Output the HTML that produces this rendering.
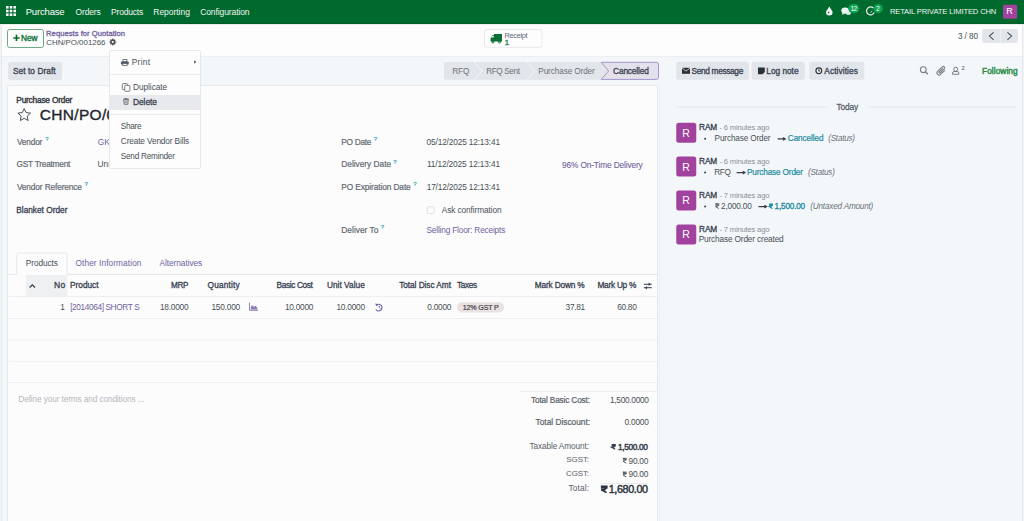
<!DOCTYPE html>
<html><head><meta charset="utf-8">
<style>
html,body{margin:0;padding:0}
body{width:1024px;height:521px;overflow:hidden;position:relative;background:#f3f7fa;font-family:"Liberation Sans",sans-serif}
.a{position:absolute;box-sizing:border-box}
.t{position:absolute;line-height:1;white-space:pre;z-index:5}
.dd .t{z-index:31}
svg{position:absolute;overflow:visible}
</style></head><body>

<!-- navbar -->
<div class="a" style="left:0;top:0;width:1024px;height:24px;background:#00692e"></div>
<div class="a" style="left:0;top:23px;width:1024px;height:1px;background:#005d27"></div>
<div class="a" style="left:0;top:24px;width:1024px;height:1px;background:#e9efeb"></div>
<svg style="left:0;top:0" width="1024" height="24">
  <g fill="#f4f7f5">
    <rect x="6" y="6" width="2.6" height="2.6"/><rect x="9.7" y="6" width="2.6" height="2.6"/><rect x="13.4" y="6" width="2.6" height="2.6"/>
    <rect x="6" y="9.7" width="2.6" height="2.6"/><rect x="9.7" y="9.7" width="2.6" height="2.6"/><rect x="13.4" y="9.7" width="2.6" height="2.6"/>
    <rect x="6" y="13.4" width="2.6" height="2.6"/><rect x="9.7" y="13.4" width="2.6" height="2.6"/><rect x="13.4" y="13.4" width="2.6" height="2.6"/>
  </g>
  <!-- drop -->
  <path d="M829.3 6.6 C828 9 826 10.8 826 12.2 A3.3 3.3 0 0 0 832.6 12.2 C832.6 10.8 830.6 9 829.3 6.6 Z" fill="#f0f4f1"/>
  <circle cx="828.6" cy="12.6" r="0.8" fill="#00692e"/>
  <!-- chat -->
  <ellipse cx="845.2" cy="10.6" rx="3.9" ry="3.1" fill="#eef3ef"/>
  <path d="M842.6 12.6 L841.8 15 L844.6 13.4Z" fill="#eef3ef"/>
  <ellipse cx="848.4" cy="13" rx="2.6" ry="1.9" fill="#dfe9e2"/>
  <rect x="848.3" y="4" width="11" height="9.2" rx="4.6" fill="#0aa34f"/>
  <!-- clock -->
  <path d="M873.5 8.2 A4 4 0 1 0 874.2 12.6" fill="none" stroke="#eef3ef" stroke-width="1.2"/>
  <path d="M870.6 12.6 L872.2 10.8" fill="none" stroke="#dfe9e2" stroke-width="0.9"/>
  <rect x="873.6" y="4" width="9.2" height="9.2" rx="4.6" fill="#0aa34f"/>
  <!-- avatar -->
  <rect x="1003" y="4.8" width="14.2" height="14" rx="1.5" fill="#a0429e"/>
</svg>

<!-- control panel -->
<div class="a" style="left:0;top:25px;width:1024px;height:31px;background:#fdfdfd"></div>
<div class="a" style="left:0;top:56px;width:1024px;height:1px;background:#eceff2"></div>
<div class="a" style="left:7px;top:29px;width:37px;height:18.5px;border:1px solid #6bab84;border-radius:2.5px;background:#fdfdfd"></div>
<svg style="left:0;top:0" width="1024" height="60">
  <path d="M16.5 34.8 V41.1 M13.3 38 H19.7" stroke="#0b6b33" stroke-width="1.7" fill="none"/>
  <!-- gear -->
  <path d="M115.43 41.41 L116.26 41.48 L116.26 42.52 L115.43 42.59 L115.08 43.45 L115.62 44.08 L114.88 44.82 L114.25 44.28 L113.39 44.63 L113.32 45.46 L112.28 45.46 L112.21 44.63 L111.35 44.28 L110.72 44.82 L109.98 44.08 L110.52 43.45 L110.17 42.59 L109.34 42.52 L109.34 41.48 L110.17 41.41 L110.52 40.55 L109.98 39.92 L110.72 39.18 L111.35 39.72 L112.21 39.37 L112.28 38.54 L113.32 38.54 L113.39 39.37 L114.25 39.72 L114.88 39.18 L115.62 39.92 L115.08 40.55Z M113.90 42.0 A1.1 1.1 0 1 0 111.70 42.0 A1.1 1.1 0 1 0 113.90 42.0Z" fill="#4b5057" fill-rule="evenodd"/>
  <!-- receipt button -->
  <rect x="484.5" y="29.5" width="57.5" height="17.8" rx="2.5" fill="#fdfdfd" stroke="#e6e9ec" stroke-width="1"/>
  <g fill="#0b6e35">
    <path d="M494 34 H502 V41.5 H490.6 V38 L492.4 35.2 H494Z"/>
    <circle cx="492.9" cy="42" r="1.4"/><circle cx="499.5" cy="42" r="1.4"/>
  </g>
  <path d="M491.8 35.9 H493.6 V37.6 H491.1Z" fill="#fdfdfd"/>
  <circle cx="492.9" cy="42" r="0.5" fill="#fdfdfd"/><circle cx="499.5" cy="42" r="0.5" fill="#fdfdfd"/>
  <!-- pager -->
  <rect x="982.2" y="28.9" width="35.8" height="14" rx="2.5" fill="#e2e5e9"/>
  <rect x="999.9" y="28.9" width="0.9" height="14" fill="#f3f4f6"/>
  <path d="M993.6 32.3 L989.4 36.1 L993.6 39.9" fill="none" stroke="#4b5057" stroke-width="1.05"/>
  <path d="M1007.4 32.3 L1011.6 36.1 L1007.4 39.9" fill="none" stroke="#4b5057" stroke-width="1.05"/>
</svg>

<!-- button row -->
<div class="a" style="left:7.5px;top:62px;width:54.5px;height:17.6px;background:#e2e5e9;border-radius:2.5px"></div>
<svg style="left:0;top:0" width="1024" height="90">
  <path d="M446 62 H601 L608.5 70.9 L601 79.7 H446 A2 2 0 0 1 444 77.7 V64 A2 2 0 0 1 446 62Z" fill="#e2e5e9"/>
  <path d="M601.2 62.3 H656.5 A2 2 0 0 1 658.5 64.3 V77.4 A2 2 0 0 1 656.5 79.4 H601.2 L608.6 70.9Z" fill="#e5e1ec" stroke="#a497c6" stroke-width="1"/>
  <path d="M474.2 62 L482 70.9 L474.2 79.7" fill="none" stroke="#f6f7f9" stroke-width="1"/>
  <path d="M527 62 L535 70.9 L527 79.7" fill="none" stroke="#f6f7f9" stroke-width="1"/>
  <!-- chatter buttons -->
  <rect x="676.4" y="61.8" width="72.7" height="18" rx="2.5" fill="#e2e5e9"/>
  <rect x="751.6" y="61.8" width="53.2" height="18" rx="2.5" fill="#e2e5e9"/>
  <rect x="809.3" y="61.8" width="55" height="18" rx="2.5" fill="#e2e5e9"/>
  <!-- envelope -->
  <rect x="682" y="67.8" width="8" height="6" fill="#2b3139"/>
  <path d="M682 68.1 L686 71.1 L690 68.1" fill="none" stroke="#e2e5e9" stroke-width="0.8"/>
  <!-- log note -->
  <path d="M758 67.4 H764.8 V72 L762.6 74.2 H758Z" fill="#2b3139"/>
  <!-- clock -->
  <circle cx="818.8" cy="70.8" r="2.9" fill="none" stroke="#2b3139" stroke-width="1.1"/>
  <path d="M818.8 69.2 V71 H820.1" fill="none" stroke="#2b3139" stroke-width="0.9"/>
  <!-- search -->
  <circle cx="923.3" cy="69.7" r="2.9" fill="none" stroke="#7a8088" stroke-width="1.1"/>
  <path d="M925.4 71.8 L927.9 74.2" stroke="#7a8088" stroke-width="1.4"/>
  <!-- paperclip -->
  <path d="M944.6 70.6 L940.6 74.3 A2 2 0 0 1 937.6 71.4 L942.2 66.9 A1.4 1.4 0 0 1 944.3 68.9 L940.2 72.8 A0.7 0.7 0 0 1 939.2 71.8 L942.8 68.4" fill="none" stroke="#7a8088" stroke-width="1.1" stroke-linecap="round"/>
  <!-- user -->
  <circle cx="955.7" cy="69.2" r="2.0" fill="none" stroke="#7a8088" stroke-width="1"/>
  <path d="M952.6 74.3 V73 A1.5 1.5 0 0 1 954.1 71.5 H957.3 A1.5 1.5 0 0 1 958.8 73 V74.3Z" fill="none" stroke="#7a8088" stroke-width="1"/>
</svg>

<!-- sheet -->
<div class="a" style="left:7.4px;top:84.5px;width:651.1px;height:460px;background:#fcfcfc;border:1px solid #e7e9ec;border-radius:2px"></div>
<div class="a" style="left:658.5px;top:84px;width:1.5px;height:437px;background:#eef1f4"></div>
<svg style="left:0;top:0" width="1024" height="521">
  <!-- star -->
  <path d="M24.2 108.6 L26.1 112.6 L30.5 113.1 L27.2 116.1 L28.1 120.5 L24.2 118.3 L20.3 120.5 L21.2 116.1 L17.9 113.1 L22.3 112.6Z" fill="none" stroke="#495057" stroke-width="1" stroke-linejoin="round"/>
  <!-- checkbox -->
  <rect x="427.3" y="206.8" width="6.8" height="6.8" rx="1.2" fill="#fdfdfd" stroke="#dadde1" stroke-width="0.9"/>
  <!-- tabs -->
  <path d="M8.5 274.4 H16.8 V255 A2 2 0 0 1 18.8 253 H65 A2 2 0 0 1 67 255 V274.4 H658" fill="none" stroke="#e4e7ea" stroke-width="1"/>
  <!-- header sort column bg -->
  <rect x="25.8" y="275" width="41.6" height="21.2" fill="#eef0f2"/>
  <path d="M29.6 287.5 L32.3 284.8 L35 287.5" fill="none" stroke="#374151" stroke-width="1.3"/>
  <!-- table lines -->
  <g fill="#edeff2">
    <rect x="8.5" y="296" width="650" height="1"/>
    <rect x="8.5" y="318" width="650" height="1"/>
    <rect x="8.5" y="339.5" width="650" height="1"/>
    <rect x="8.5" y="360.7" width="650" height="1"/>
    <rect x="8.5" y="382" width="650" height="1"/>
    <rect x="519.7" y="391" width="138.5" height="1"/>
  </g>
  <!-- settings icon -->
  <g stroke="#374151" stroke-width="1">
    <path d="M643.8 284.3 H651.8 M643.8 287.7 H651.8"/>
  </g>
  <path d="M648.6 282.6 L650.8 284.3 L648.6 286 Z M647 286 L644.8 287.7 L647 289.4Z" fill="#374151"/>
  <!-- chart icon -->
  <path d="M249.5 302.8 V310.3 H258.2" fill="none" stroke="#71639e" stroke-width="0.8"/>
  <path d="M250.8 309.6 V307 L252.4 305.3 L254 307 L255.6 305.8 L257.4 308 V309.6Z" fill="#8a7db0"/>
  <!-- history icon -->
  <path d="M376.3 305.1 A3.4 3.4 0 1 1 375.8 309.5" fill="none" stroke="#71639e" stroke-width="1.1"/>
  <path d="M375 303.6 L376.6 306.3 L378.6 304.3Z" fill="#71639e"/>
  <path d="M379.3 305.8 V307.6 L380.6 308.5" fill="none" stroke="#71639e" stroke-width="0.9"/>
  <!-- tax badge -->
  <rect x="457.1" y="302.2" width="47" height="10.2" rx="5.1" fill="#eae1e1"/>
  <!-- total separator -->
  <rect x="601" y="483.3" width="47.5" height="0.8" fill="#e3e5e8"/>
</svg>

<!-- chatter -->
<svg style="left:0;top:0" width="1024" height="521">
  <rect x="676" y="106.6" width="151" height="0.9" fill="#e4e7ea"/>
  <rect x="867" y="106.6" width="150.5" height="0.9" fill="#e4e7ea"/>
  <g fill="#a0429e">
    <rect x="676.25" y="122.75" width="20" height="20" rx="2.5"/>
    <rect x="676.25" y="156.6" width="20" height="20" rx="2.5"/>
    <rect x="676.25" y="190.6" width="20" height="20" rx="2.5"/>
    <rect x="676.25" y="224.6" width="20" height="20" rx="2.5"/>
  </g>
  <g fill="#374151">
    <circle cx="705.1" cy="138.7" r="1"/>
    <circle cx="705.1" cy="172.5" r="1"/>
    <circle cx="705.1" cy="206.4" r="1"/>
  </g>
  <g stroke="#3b4048" stroke-width="1.1" fill="none">
    <path d="M777.6 138.9 H784.4 M783 137.5 L785.3 138.9 L783 140.3"/>
    <path d="M736.6 172.6 H744.2 M742.8 171.2 L745.1 172.6 L742.8 174"/>
    <path d="M758.5 206.6 H765.8 M764.4 205.2 L766.7 206.6 L764.4 208"/>
  </g>
</svg>

<div class="t" style="left:25.70px;top:7.00px;font-size:9.5px;color:#ffffff;letter-spacing:-0.171px">Purchase</div>
<div class="t" style="left:75.60px;top:8.00px;font-size:8.5px;color:#f0f5f2;letter-spacing:-0.180px">Orders</div>
<div class="t" style="left:111.10px;top:8.00px;font-size:8.5px;color:#f0f5f2;letter-spacing:-0.200px">Products</div>
<div class="t" style="left:153.30px;top:8.00px;font-size:8.5px;color:#f0f5f2;letter-spacing:-0.037px">Reporting</div>
<div class="t" style="left:200.20px;top:8.00px;font-size:8.5px;color:#f0f5f2;letter-spacing:-0.100px">Configuration</div>
<div class="t" style="left:889.90px;top:8.00px;font-size:7.6px;color:#f0f5f2;letter-spacing:-0.136px">RETAIL PRIVATE LIMITED CHN</div>
<div class="t" style="left:850.50px;top:6.00px;font-size:6.8px;color:#ffffff;letter-spacing:-0.700px">12</div>
<div class="t" style="left:876.10px;top:6.00px;font-size:6.8px;color:#ffffff">2</div>
<div class="t" style="left:1006.30px;top:7.00px;font-size:9px;color:#ffffff">R</div>
<div class="t" style="left:21.10px;top:34.00px;font-size:8.3px;color:#00682d;letter-spacing:-0.100px;-webkit-text-stroke:0.3px #00682d">New</div>
<div class="t" style="left:46.10px;top:30.00px;font-size:7.6px;color:#71639e;letter-spacing:0.043px;-webkit-text-stroke:0.3px #71639e">Requests for Quotation</div>
<div class="t" style="left:46.30px;top:39.00px;font-size:7.9px;color:#495057;letter-spacing:-0.008px">CHN/PO/001266</div>
<div class="t" style="left:504.40px;top:32.00px;font-size:7.4px;color:#5f6670;letter-spacing:-0.300px">Receipt</div>
<div class="t" style="left:504.70px;top:39.00px;font-size:7.6px;color:#1a7d4a;-webkit-text-stroke:0.3px #1a7d4a">1</div>
<div class="t" style="left:957.90px;top:33.00px;font-size:8.2px;color:#495057;letter-spacing:-0.080px">3 / 80</div>
<div class="t" style="left:12.90px;top:67.00px;font-size:8.3px;color:#374151;letter-spacing:0.073px;-webkit-text-stroke:0.3px #374151">Set to Draft</div>
<div class="t" style="left:452.30px;top:68.00px;font-size:8.2px;color:#6c737a;letter-spacing:-0.100px">RFQ</div>
<div class="t" style="left:486.20px;top:68.00px;font-size:8.2px;color:#6c737a;letter-spacing:-0.371px">RFQ Sent</div>
<div class="t" style="left:538.30px;top:68.00px;font-size:8.2px;color:#6c737a;letter-spacing:-0.100px">Purchase Order</div>
<div class="t" style="left:613.10px;top:67.00px;font-size:8.3px;color:#374151;letter-spacing:-0.150px;-webkit-text-stroke:0.3px #374151">Cancelled</div>
<div class="t" style="left:691.60px;top:67.00px;font-size:8.3px;color:#374151;letter-spacing:-0.336px;-webkit-text-stroke:0.3px #374151">Send message</div>
<div class="t" style="left:766.30px;top:67.00px;font-size:8.3px;color:#374151;letter-spacing:-0.014px;-webkit-text-stroke:0.3px #374151">Log note</div>
<div class="t" style="left:824.30px;top:67.00px;font-size:8.3px;color:#374151;letter-spacing:0.089px;-webkit-text-stroke:0.3px #374151">Activities</div>
<div class="t" style="left:982.00px;top:67.00px;font-size:8.3px;color:#2e8b47;letter-spacing:0.069px;-webkit-text-stroke:0.45px #2e8b47">Following</div>
<div class="t" style="left:961.50px;top:66.00px;font-size:5.8px;color:#4b5057">2</div>
<div class="t" style="left:836.40px;top:103.00px;font-size:8.3px;color:#5f6670;letter-spacing:-0.100px;-webkit-text-stroke:0.3px #5f6670">Today</div>
<div class="t" style="left:699.00px;top:123.00px;font-size:8.3px;color:#374151;letter-spacing:-0.100px;-webkit-text-stroke:0.3px #374151">RAM</div>
<div class="t" style="left:719.50px;top:124.00px;font-size:7.6px;color:#8a9097;letter-spacing:-0.171px">- 6 minutes ago</div>
<div class="t" style="left:714.60px;top:135.00px;font-size:8.2px;color:#495057;letter-spacing:-0.138px">Purchase Order</div>
<div class="t" style="left:787.80px;top:135.00px;font-size:8.2px;color:#1b8ba0;letter-spacing:-0.075px;-webkit-text-stroke:0.2px #1b8ba0">Cancelled</div>
<div class="t" style="left:828.20px;top:135.00px;font-size:8.2px;color:#6c737a;font-style:italic;letter-spacing:-0.257px">(Status)</div>
<div class="t" style="left:699.00px;top:157.00px;font-size:8.3px;color:#374151;letter-spacing:-0.100px;-webkit-text-stroke:0.3px #374151">RAM</div>
<div class="t" style="left:719.50px;top:158.00px;font-size:7.6px;color:#8a9097;letter-spacing:-0.171px">- 6 minutes ago</div>
<div class="t" style="left:714.30px;top:169.00px;font-size:8.2px;color:#495057;letter-spacing:-0.350px">RFQ</div>
<div class="t" style="left:747.00px;top:169.00px;font-size:8.2px;color:#1b8ba0;letter-spacing:-0.138px;-webkit-text-stroke:0.2px #1b8ba0">Purchase Order</div>
<div class="t" style="left:807.90px;top:169.00px;font-size:8.2px;color:#6c737a;font-style:italic;letter-spacing:-0.229px">(Status)</div>
<div class="t" style="left:699.00px;top:191.00px;font-size:8.3px;color:#374151;letter-spacing:-0.100px;-webkit-text-stroke:0.3px #374151">RAM</div>
<div class="t" style="left:719.50px;top:192.00px;font-size:7.6px;color:#8a9097;letter-spacing:-0.171px">- 7 minutes ago</div>
<div class="t" style="left:721.10px;top:203.00px;font-size:8.2px;color:#495057;letter-spacing:-0.171px">2,000.00</div>
<div class="t" style="left:774.60px;top:203.00px;font-size:8.2px;color:#1b8ba0;letter-spacing:-0.186px;-webkit-text-stroke:0.3px #1b8ba0">1,500.00</div>
<div class="t" style="left:810.30px;top:203.00px;font-size:8.2px;color:#6c737a;font-style:italic;letter-spacing:-0.207px">(Untaxed Amount)</div>
<div class="t" style="left:699.00px;top:225.00px;font-size:8.3px;color:#374151;letter-spacing:-0.100px;-webkit-text-stroke:0.3px #374151">RAM</div>
<div class="t" style="left:719.50px;top:226.00px;font-size:7.6px;color:#8a9097;letter-spacing:-0.171px">- 7 minutes ago</div>
<div class="t" style="left:698.70px;top:235.00px;font-size:8.3px;color:#495057;letter-spacing:-0.167px">Purchase Order created</div>
<div class="t" style="left:682.20px;top:128.00px;font-size:10.5px;color:#ffffff">R</div>
<div class="t" style="left:682.20px;top:162.00px;font-size:10.5px;color:#ffffff">R</div>
<div class="t" style="left:682.20px;top:195.00px;font-size:10.5px;color:#ffffff">R</div>
<div class="t" style="left:682.20px;top:229.00px;font-size:10.5px;color:#ffffff">R</div>
<div class="t" style="left:16.30px;top:96.00px;font-size:8.3px;color:#3d434b;letter-spacing:-0.196px;-webkit-text-stroke:0.45px #3d434b">Purchase Order</div>
<div class="t" style="left:39.80px;top:107.00px;font-size:15.5px;color:#1f2430;letter-spacing:0.300px;-webkit-text-stroke:0.36px #1f2430">CHN/PO/001266</div>
<div class="t" style="left:16.90px;top:138.00px;font-size:8.3px;color:#636a72;letter-spacing:-0.160px;-webkit-text-stroke:0.2px #636a72">Vendor</div>
<div class="t" style="left:16.60px;top:160.00px;font-size:8.3px;color:#636a72;letter-spacing:-0.233px;-webkit-text-stroke:0.2px #636a72">GST Treatment</div>
<div class="t" style="left:16.90px;top:183.00px;font-size:8.3px;color:#636a72;letter-spacing:-0.120px;-webkit-text-stroke:0.2px #636a72">Vendor Reference</div>
<div class="t" style="left:16.30px;top:206.00px;font-size:8.3px;color:#374151;letter-spacing:-0.008px;-webkit-text-stroke:0.3px #374151">Blanket Order</div>
<div class="t" style="left:97.80px;top:138.00px;font-size:8.3px;color:#71639e">GK</div>
<div class="t" style="left:97.60px;top:160.00px;font-size:8.3px;color:#495057">Unr</div>
<div class="t" style="left:341.30px;top:138.00px;font-size:8.3px;color:#636a72;letter-spacing:-0.283px;-webkit-text-stroke:0.2px #636a72">PO Date</div>
<div class="t" style="left:341.30px;top:160.00px;font-size:8.3px;color:#636a72;-webkit-text-stroke:0.2px #636a72">Delivery Date</div>
<div class="t" style="left:341.30px;top:183.00px;font-size:8.3px;color:#636a72;letter-spacing:-0.094px;-webkit-text-stroke:0.2px #636a72">PO Expiration Date</div>
<div class="t" style="left:341.30px;top:226.00px;font-size:8.3px;color:#636a72;letter-spacing:0.044px;-webkit-text-stroke:0.2px #636a72">Deliver To</div>
<div class="t" style="left:426.60px;top:138.00px;font-size:8.3px;color:#495057;letter-spacing:-0.150px">05/12/2025 12:13:41</div>
<div class="t" style="left:426.90px;top:160.00px;font-size:8.3px;color:#495057;letter-spacing:-0.128px">11/12/2025 12:13:41</div>
<div class="t" style="left:426.70px;top:183.00px;font-size:8.3px;color:#495057;letter-spacing:-0.156px">17/12/2025 12:13:41</div>
<div class="t" style="left:441.70px;top:206.00px;font-size:8.3px;color:#495057;letter-spacing:-0.087px">Ask confirmation</div>
<div class="t" style="left:426.50px;top:226.00px;font-size:8.3px;color:#71639e;letter-spacing:-0.191px">Selling Floor: Receipts</div>
<div class="t" style="left:562.00px;top:161.00px;font-size:8.3px;color:#71639e;letter-spacing:-0.126px;-webkit-text-stroke:0.1px #71639e">96% On-Time Delivery</div>
<div class="t" style="left:45.30px;top:136.00px;font-size:6.0px;color:#3aa9c0;-webkit-text-stroke:0.2px #3aa9c0">?</div>
<div class="t" style="left:84.60px;top:181.00px;font-size:6.0px;color:#3aa9c0;-webkit-text-stroke:0.2px #3aa9c0">?</div>
<div class="t" style="left:373.70px;top:136.00px;font-size:6.0px;color:#3aa9c0;-webkit-text-stroke:0.2px #3aa9c0">?</div>
<div class="t" style="left:393.20px;top:159.00px;font-size:6.0px;color:#3aa9c0;-webkit-text-stroke:0.2px #3aa9c0">?</div>
<div class="t" style="left:413.30px;top:181.00px;font-size:6.0px;color:#3aa9c0;-webkit-text-stroke:0.2px #3aa9c0">?</div>
<div class="t" style="left:380.70px;top:224.00px;font-size:6.0px;color:#3aa9c0;-webkit-text-stroke:0.2px #3aa9c0">?</div>
<div class="t" style="left:25.80px;top:259.00px;font-size:8.3px;color:#495057;letter-spacing:-0.086px">Products</div>
<div class="t" style="left:75.50px;top:259.00px;font-size:8.3px;color:#71639e;letter-spacing:0.087px">Other Information</div>
<div class="t" style="left:159.50px;top:259.00px;font-size:8.3px;color:#71639e;letter-spacing:-0.055px">Alternatives</div>
<div class="t" style="left:53.90px;top:281.00px;font-size:8.51px;color:#374151;letter-spacing:0.400px;-webkit-text-stroke:0.3px #374151">No</div>
<div class="t" style="left:70.10px;top:281.00px;font-size:8.3px;color:#374151;letter-spacing:-0.033px;-webkit-text-stroke:0.3px #374151">Product</div>
<div class="t" style="left:171.10px;top:282.00px;font-size:8.16px;color:#374151;letter-spacing:-0.450px;-webkit-text-stroke:0.3px #374151">MRP</div>
<div class="t" style="left:207.60px;top:281.00px;font-size:8.3px;color:#374151;letter-spacing:0.157px;-webkit-text-stroke:0.3px #374151">Quantity</div>
<div class="t" style="left:276.50px;top:281.00px;font-size:8.3px;color:#374151;letter-spacing:-0.367px;-webkit-text-stroke:0.3px #374151">Basic Cost</div>
<div class="t" style="left:326.90px;top:281.00px;font-size:8.3px;color:#374151;letter-spacing:0.033px;-webkit-text-stroke:0.3px #374151">Unit Value</div>
<div class="t" style="left:399.20px;top:281.00px;font-size:8.3px;color:#374151;letter-spacing:-0.062px;-webkit-text-stroke:0.3px #374151">Total Disc Amt</div>
<div class="t" style="left:456.90px;top:281.00px;font-size:8.3px;color:#374151;letter-spacing:-0.325px;-webkit-text-stroke:0.3px #374151">Taxes</div>
<div class="t" style="left:534.80px;top:281.00px;font-size:8.3px;color:#374151;letter-spacing:-0.180px;-webkit-text-stroke:0.3px #374151">Mark Down %</div>
<div class="t" style="left:597.40px;top:281.00px;font-size:8.3px;color:#374151;letter-spacing:-0.250px;-webkit-text-stroke:0.3px #374151">Mark Up %</div>
<div class="t" style="left:60.30px;top:303.00px;font-size:8.3px;color:#495057">1</div>
<div class="t" style="left:70.20px;top:303.00px;font-size:8.3px;color:#71639e;letter-spacing:-0.394px">[2014064] SHORT S</div>
<div class="t" style="left:160.00px;top:303.00px;font-size:8.3px;color:#495057;letter-spacing:-0.250px">18.0000</div>
<div class="t" style="left:211.40px;top:303.00px;font-size:8.3px;color:#495057;letter-spacing:-0.200px">150.000</div>
<div class="t" style="left:284.90px;top:303.00px;font-size:8.3px;color:#495057;letter-spacing:-0.250px">10.0000</div>
<div class="t" style="left:336.40px;top:303.00px;font-size:8.3px;color:#495057;letter-spacing:-0.217px">10.0000</div>
<div class="t" style="left:427.30px;top:303.00px;font-size:8.3px;color:#495057;letter-spacing:-0.240px">0.0000</div>
<div class="t" style="left:462.80px;top:305.00px;font-size:7.1px;color:#3f444b;letter-spacing:-0.163px;-webkit-text-stroke:0.2px #3f444b">12% GST P</div>
<div class="t" style="left:565.60px;top:303.00px;font-size:8.3px;color:#495057;letter-spacing:-0.325px">37.81</div>
<div class="t" style="left:617.30px;top:303.00px;font-size:8.3px;color:#495057;letter-spacing:-0.325px">60.80</div>
<div class="t" style="left:18.30px;top:395.00px;font-size:8.3px;color:#b4b9bf;letter-spacing:-0.129px">Define your terms and conditions ...</div>
<div class="t" style="left:531.00px;top:396.00px;font-size:8.3px;color:#5a6169;letter-spacing:-0.175px;-webkit-text-stroke:0.2px #5a6169">Total Basic Cost:</div>
<div class="t" style="left:610.00px;top:396.00px;font-size:8.3px;color:#495057;letter-spacing:-0.289px">1,500.0000</div>
<div class="t" style="left:535.60px;top:418.00px;font-size:8.3px;color:#5a6169;-webkit-text-stroke:0.2px #5a6169">Total Discount:</div>
<div class="t" style="left:624.40px;top:418.00px;font-size:8.3px;color:#495057;letter-spacing:-0.180px">0.0000</div>
<div class="t" style="left:529.40px;top:442.00px;font-size:8.3px;color:#5a6169;letter-spacing:-0.121px">Taxable Amount:</div>
<div class="t" style="left:617.90px;top:443.00px;font-size:8.3px;color:#374151;letter-spacing:-0.321px;-webkit-text-stroke:0.45px #374151">1,500.00</div>
<div class="t" style="left:566.30px;top:456.00px;font-size:8.0px;color:#5a6169;letter-spacing:-0.100px">SGST:</div>
<div class="t" style="left:628.50px;top:457.00px;font-size:8.3px;color:#495057;letter-spacing:-0.225px">90.00</div>
<div class="t" style="left:566.10px;top:470.00px;font-size:8.0px;color:#5a6169;letter-spacing:-0.150px">CGST:</div>
<div class="t" style="left:628.50px;top:470.00px;font-size:8.3px;color:#495057;letter-spacing:-0.225px">90.00</div>
<div class="t" style="left:568.50px;top:484.00px;font-size:8.3px;color:#5a6169;letter-spacing:0.140px">Total:</div>
<div class="t" style="left:608.70px;top:484.00px;font-size:10.8px;color:#2d3440;letter-spacing:-0.379px;-webkit-text-stroke:0.45px #2d3440">1,680.00</div>
<svg style="left:0;top:0;z-index:5" width="1024" height="521"><path d="M715.40 203.88 H719.30 M715.40 205.18 H719.30 M715.60 203.88 C719.11 203.88 719.11 206.53 715.60 206.53 L718.72 208.52" fill="none" stroke="#495057" stroke-width="0.95"/><path d="M769.10 203.97 H773.00 M769.10 205.18 H773.00 M769.30 203.97 C772.81 203.97 772.81 206.53 769.30 206.53 L772.42 208.46" fill="none" stroke="#1b8ba0" stroke-width="1.15"/><path d="M611.60 444.75 H615.80 M611.60 445.92 H615.80 M611.81 444.75 C615.59 444.75 615.59 447.29 611.81 447.29 L615.17 449.21" fill="none" stroke="#374151" stroke-width="1.3"/><path d="M622.80 458.38 H626.80 M622.80 459.75 H626.80 M623.00 458.38 C626.60 458.38 626.60 461.15 623.00 461.15 L626.20 463.21" fill="none" stroke="#495057" stroke-width="0.95"/><path d="M622.80 472.18 H626.80 M622.80 473.55 H626.80 M623.00 472.18 C626.60 472.18 626.60 474.95 623.00 474.95 L626.20 477.01" fill="none" stroke="#495057" stroke-width="0.95"/><path d="M600.90 486.43 H607.60 M600.90 488.01 H607.60 M601.24 486.43 C607.26 486.43 607.26 489.83 601.24 489.83 L606.60 492.41" fill="none" stroke="#2d3440" stroke-width="1.65"/></svg>
<div class="a" style="left:1021.5px;top:24px;width:2.5px;height:497px;background:#f1f3f5;border-left:1px solid #e6e9ec;z-index:40"></div>
<div class="a" style="left:0;top:25px;width:1.6px;height:496px;background:#f2f3f5;border-right:0.6px solid #e6e9ec"></div>

<!-- dropdown -->
<div class="dd">
<div class="a" style="left:109px;top:50px;width:91.5px;height:118.5px;background:#fdfdfd;border:1px solid #e6e9ec;border-radius:1.5px;z-index:30"></div>
<div class="a" style="left:110px;top:94.6px;width:89.5px;height:15px;background:#e7e9ec;z-index:30"></div>
<div class="a" style="left:110px;top:74px;width:89.5px;height:1px;background:#eceef1;z-index:30"></div>
<div class="a" style="left:110px;top:114px;width:89.5px;height:1px;background:#eceef1;z-index:30"></div>
<svg style="left:0;top:0;z-index:31" width="1024" height="521">
  <!-- printer -->
  <rect x="122.9" y="59.6" width="4.0" height="2.2" fill="none" stroke="#555b63" stroke-width="0.8"/>
  <rect x="120.9" y="61.4" width="7.8" height="3.2" rx="0.9" fill="#555b63"/>
  <rect x="122.7" y="63.4" width="4.4" height="2.0" fill="#fdfdfd" stroke="#555b63" stroke-width="0.8"/>
  <path d="M194.2 60.3 L196.3 62 L194.2 63.7Z" fill="#495057"/>
  <!-- duplicate -->
  <rect x="122.3" y="83.6" width="5.2" height="6" rx="0.8" fill="none" stroke="#6b7178" stroke-width="0.9"/>
  <rect x="124.7" y="85.3" width="5.2" height="6" rx="0.8" fill="#fdfdfd" stroke="#6b7178" stroke-width="0.9"/>
  <!-- trash -->
  <path d="M123 99.2 H129 M124.9 99.2 V98.5 H127.1 V99.2" fill="none" stroke="#60666d" stroke-width="0.8"/>
  <path d="M123.8 99.8 H128.2 L127.8 104.3 H124.2Z" fill="none" stroke="#60666d" stroke-width="0.85"/>
  <path d="M125.3 100.8 V103.3 M126.7 100.8 V103.3" stroke="#60666d" stroke-width="0.6"/>
</svg>
<div class="t" style="left:131.70px;top:58.00px;font-size:8.3px;color:#495057;letter-spacing:0.325px">Print</div>
<div class="t" style="left:133.00px;top:83.00px;font-size:8.3px;color:#495057;letter-spacing:-0.050px">Duplicate</div>
<div class="t" style="left:133.00px;top:98.00px;font-size:8.3px;color:#374151;-webkit-text-stroke:0.3px #374151">Delete</div>
<div class="t" style="left:120.80px;top:122.00px;font-size:8.3px;color:#495057;letter-spacing:-0.350px">Share</div>
<div class="t" style="left:120.80px;top:137.00px;font-size:8.3px;color:#495057;letter-spacing:-0.144px">Create Vendor Bills</div>
<div class="t" style="left:120.80px;top:152.00px;font-size:8.3px;color:#495057;letter-spacing:-0.292px">Send Reminder</div>
</div>
</body></html>
